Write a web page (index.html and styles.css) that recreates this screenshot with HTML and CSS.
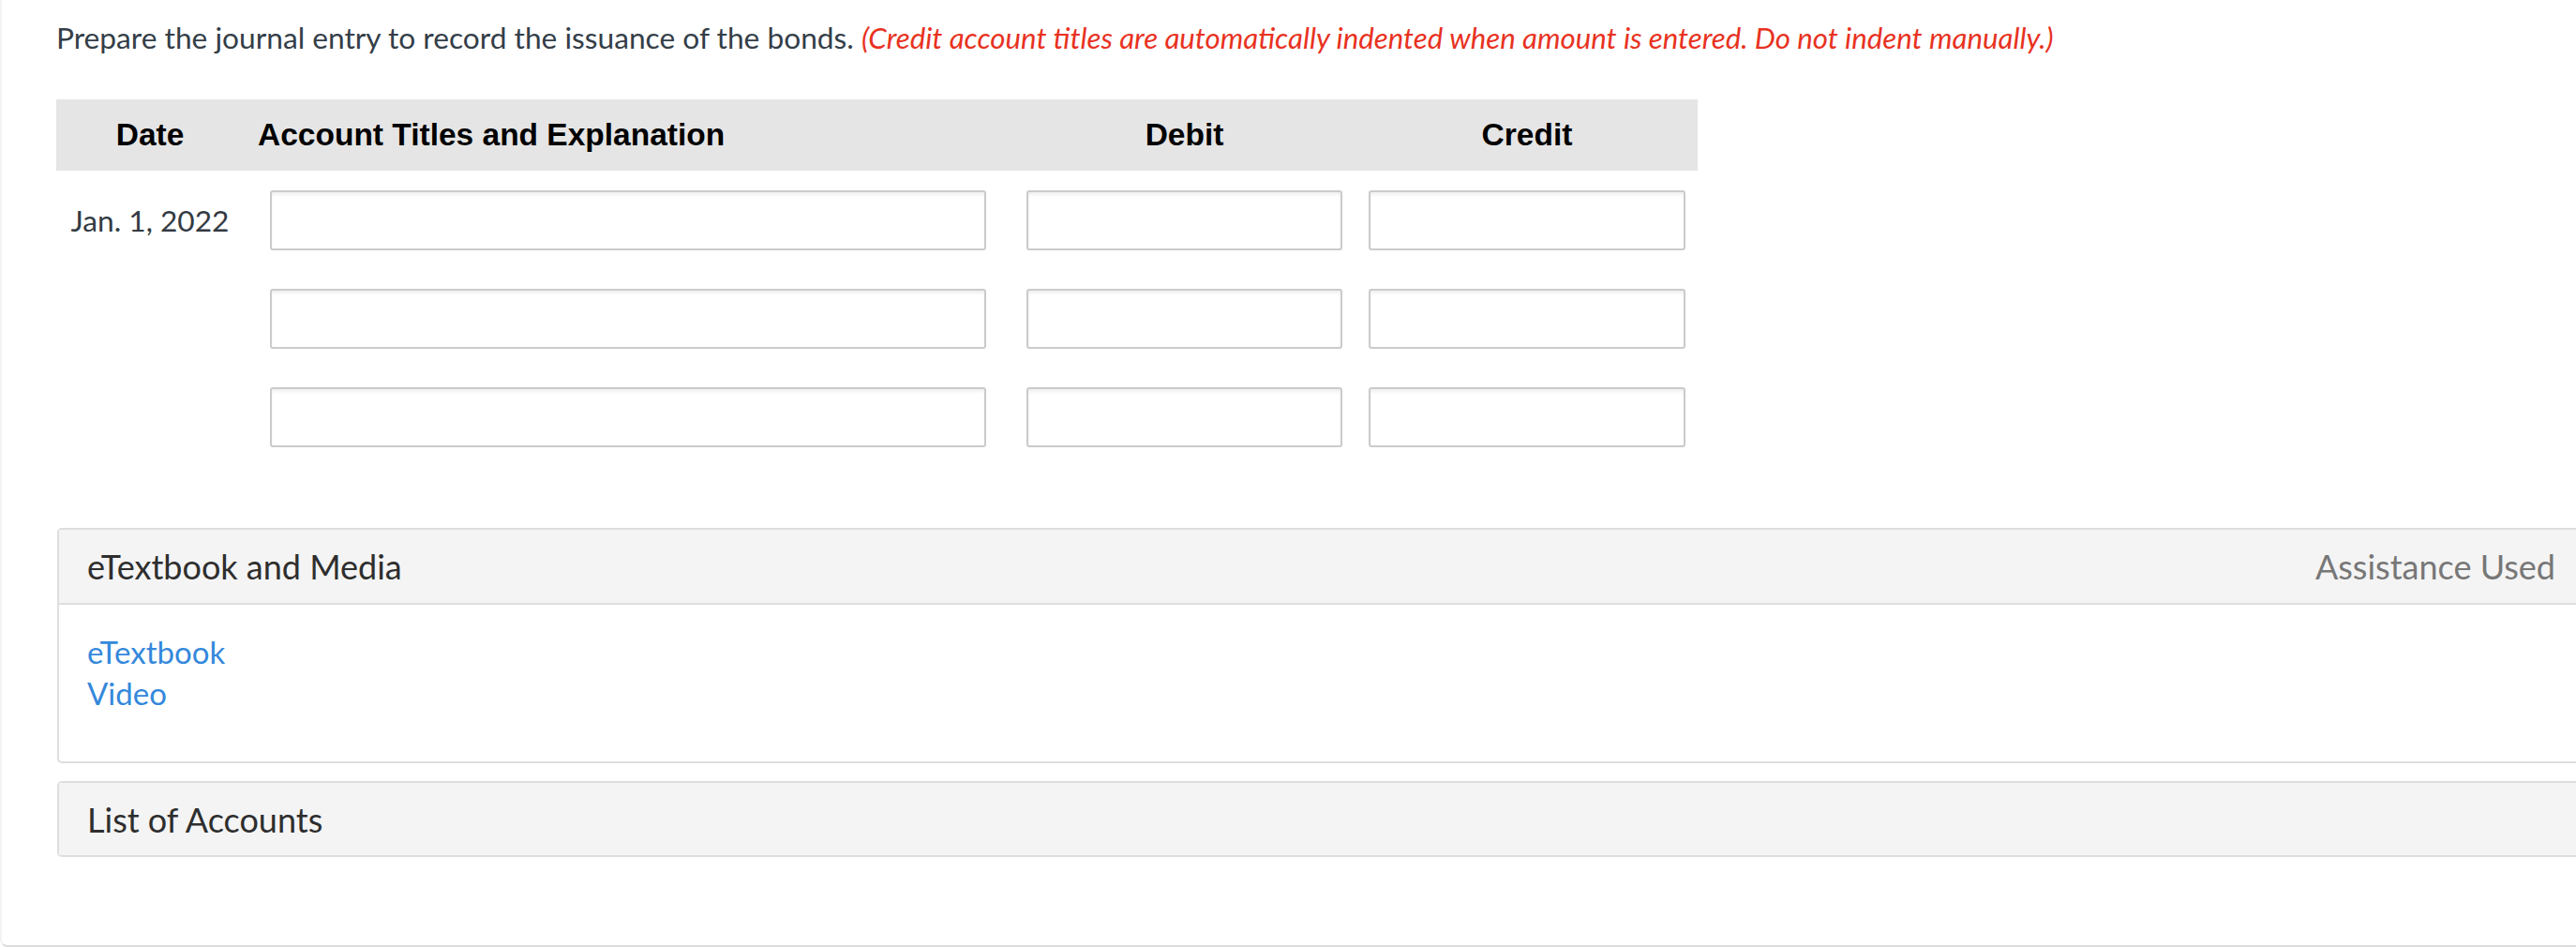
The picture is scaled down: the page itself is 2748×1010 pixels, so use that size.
FILE: index.html
```html
<!DOCTYPE html>
<html lang="en">
<head>
<meta charset="utf-8">
<title>Journal entry</title>
<link rel="stylesheet" href="styles.css">
</head>
<body>
<div class="page">
  <p class="instructions">Prepare the journal entry to record the issuance of the bonds. <em class="note">(Credit account titles are automatically indented when amount is entered. Do not indent manually.)</em></p>

  <div class="journal">
    <div class="jrow jhead">
      <div class="c-date">Date</div>
      <div class="c-acct">Account Titles and Explanation</div>
      <div class="c-debit">Debit</div>
      <div class="c-credit">Credit</div>
    </div>
    <div class="jrow">
      <div class="c-date">Jan. 1, 2022</div>
      <div class="c-acct"><input class="field" type="text"></div>
      <div class="c-debit"><input class="field" type="text"></div>
      <div class="c-credit"><input class="field" type="text"></div>
    </div>
    <div class="jrow">
      <div class="c-date"></div>
      <div class="c-acct"><input class="field" type="text"></div>
      <div class="c-debit"><input class="field" type="text"></div>
      <div class="c-credit"><input class="field" type="text"></div>
    </div>
    <div class="jrow">
      <div class="c-date"></div>
      <div class="c-acct"><input class="field" type="text"></div>
      <div class="c-debit"><input class="field" type="text"></div>
      <div class="c-credit"><input class="field" type="text"></div>
    </div>
  </div>

  <div class="panel media">
    <div class="panel-head">
      <span class="panel-title">eTextbook and Media</span>
      <span class="assist">Assistance Used</span>
    </div>
    <div class="panel-body">
      <a class="link" href="#">eTextbook</a>
      <a class="link" href="#">Video</a>
    </div>
  </div>

  <div class="panel accounts">
    <div class="panel-head">
      <span class="panel-title">List of Accounts</span>
    </div>
  </div>
</div>
</body>
</html>
```

FILE: styles.css
```css
html, body {
  margin: 0;
  padding: 0;
  background: #ffffff;
  overflow: hidden;
}

body {
  font-family: Lato, "Open Sans", sans-serif;
  width: 2748px;
  height: 1010px;
}

.page {
  box-sizing: border-box;
  height: 1010px;
  padding: 22px 0 0 60px;
  border-left: 2px solid #f3f3f3;
  border-bottom: 2px solid #dcdcdc;
  border-bottom-left-radius: 8px;
  margin-right: -10px;
}

.instructions {
  margin: 0;
  font-size: 31.7px;
  line-height: 36px;
  color: #343e48;
  margin-left: -2px;
  white-space: nowrap;
}

.note {
  color: #e8321f;
  font-style: italic;
  font-size: 31.2px;
}

.journal {
  width: 1751px;
  margin-top: 48px;
  margin-left: -2px;
}

.jrow {
  display: grid;
  grid-template-columns: 200px 805px 380px 366px;
  align-items: center;
  padding: 21px 0 20px;
}

.jhead {
  background: #e5e5e5;
  height: 76px;
  padding: 0;
  box-sizing: border-box;
  font-family: "Liberation Sans", Arial, sans-serif;
  font-weight: 700;
  font-size: 33.5px;
  color: #000000;
}

.jhead .c-acct {
  padding-left: 15px;
}

.jhead .c-date {
  text-align: center;
  font-size: 33.5px;
  color: #000000;
}

.c-date {
  font-size: 31.7px;
  color: #333a42;
  text-align: center;
}

.c-acct {
  padding: 0 13px 0 28px;
}

.c-debit {
  padding: 0 13px 0 30px;
  text-align: center;
}

.c-credit {
  padding: 0 13px 0 15px;
  text-align: center;
}

.field {
  display: block;
  box-sizing: border-box;
  width: 100%;
  height: 64px;
  margin: 0;
  border: 2px solid #cbcbcb;
  border-radius: 3px;
  background: #ffffff;
  box-shadow: inset 0 3px 3px rgba(0, 0, 0, 0.06);
  font-family: Lato, sans-serif;
  font-size: 28px;
}

.panel {
  border: 2px solid #dedede;
  border-right: none;
  border-radius: 5px 0 0 5px;
  background: #ffffff;
  margin-left: -1px;
}

.media {
  margin-top: 66px;
}

.accounts {
  margin-top: 19px;
}

.panel-head {
  display: flex;
  align-items: center;
  justify-content: space-between;
  height: 78px;
  padding: 0 32px 0 30px;
  background: #f4f4f4;
  font-size: 36px;
}

.accounts .panel-head {
  height: 77px;
}

.media .panel-head {
  border-bottom: 2px solid #dedede;
}

.panel-title {
  color: #2e2e2e;
}

.assist {
  color: #777777;
}

.panel-body {
  display: flex;
  flex-direction: column;
  align-items: flex-start;
  padding: 28px 30px 51px;
}

.link {
  font-size: 33px;
  line-height: 44px;
  color: #3488db;
  text-decoration: none;
}
```
